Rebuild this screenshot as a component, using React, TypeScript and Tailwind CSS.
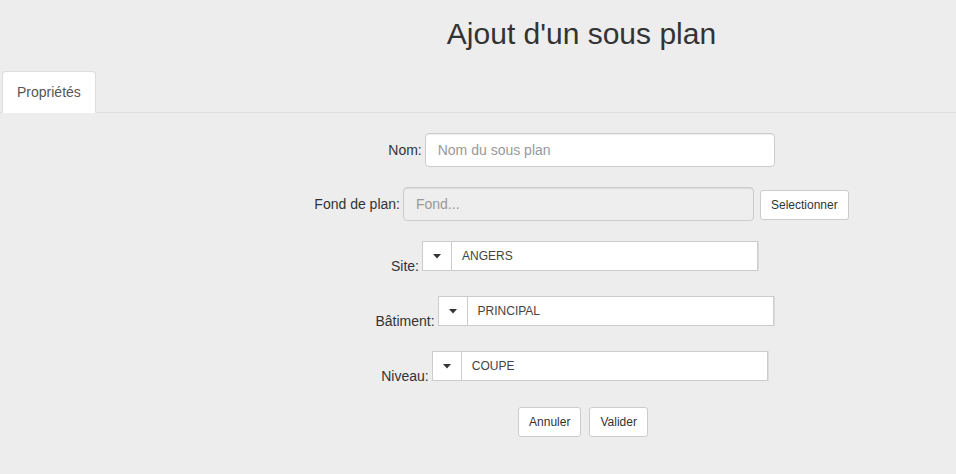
import React from "react";

function Caret() {
  return (
    <svg width="8" height="5" viewBox="0 0 8 5" aria-hidden="true">
      <path d="M0 0 L8 0 L4 4.5 Z" fill="#333" />
    </svg>
  );
}

function Dropdown({ label, value }: { label: string; value: string }) {
  return (
    <div className="flex items-end gap-[3px]">
      <label className="-mb-[5px] text-[14px] leading-[20px] text-[#333]">{label}</label>
      <div className="mr-[14px] flex h-[30px] w-[336px] border border-[#ccc] bg-white shadow-[1px_0_0_#ddd]">
        <button className="flex w-[29px] items-center justify-center border-r border-[#ccc] bg-white">
          <Caret />
        </button>
        <div className="flex flex-1 items-center pl-[10px] text-[12px] text-[#444]">{value}</div>
      </div>
    </div>
  );
}

export default function App() {
  return (
    <div
      className="min-h-[474px] w-full bg-[#ededed] text-[#333]"
      style={{ fontFamily: '"Liberation Sans", Arial, Helvetica, sans-serif' }}
    >
      <div className="flex justify-center pl-[207px] pt-[17px]">
        <h1 className="text-[30px] leading-[33px] font-normal text-[#333]">Ajout d'un sous plan</h1>
      </div>

      <div className="mt-[21px] flex border-b border-[#ddd] pl-[2px]">
        <div className="-mb-px rounded-t-[4px] border border-b-transparent border-[#ddd] bg-white px-[14px] py-[10px] text-[14px] leading-[20px] text-[#555]">
          Propriétés
        </div>
      </div>

      <div className="flex flex-col items-center pl-[207px] pt-[20px]">
        <div className="flex items-center gap-[3px]">
          <label className="text-[14px] leading-[20px] text-[#333]">Nom:</label>
          <input
            className="h-[34px] w-[350px] rounded-[4px] border border-[#ccc] bg-white px-[12px] text-[14px] text-[#555] shadow-[inset_0_1px_1px_rgba(0,0,0,0.075)] outline-none placeholder:text-[#999]"
            placeholder="Nom du sous plan"
          />
        </div>

        <div className="mt-[20px] flex items-center">
          <label className="mr-[3px] text-[14px] leading-[20px] text-[#333]">Fond de plan:</label>
          <input
            disabled
            className="h-[34px] w-[351px] rounded-[4px] border border-[#ccc] bg-[#eee] px-[12px] text-[14px] text-[#555] shadow-[inset_0_1px_1px_rgba(0,0,0,0.075)] outline-none placeholder:text-[#999]"
            placeholder="Fond..."
          />
          <button className="ml-[6px] mt-[2px] h-[30px] rounded-[3px] border border-[#ccc] bg-white px-[10px] text-[12px] text-[#333]">
            Selectionner
          </button>
        </div>

        <div className="mt-[20px] flex flex-col items-center gap-[25px]">
          <Dropdown label="Site:" value="ANGERS" />
          <Dropdown label="Bâtiment:" value="PRINCIPAL" />
          <Dropdown label="Niveau:" value="COUPE" />
        </div>

        <div className="mt-[26px] flex gap-[8px] pl-[3px]">
          <button className="h-[30px] rounded-[3px] border border-[#ccc] bg-white px-[10px] text-[12px] text-[#333]">
            Annuler
          </button>
          <button className="h-[30px] rounded-[3px] border border-[#ccc] bg-white px-[10px] text-[12px] text-[#333]">
            Valider
          </button>
        </div>
      </div>
    </div>
  );
}
